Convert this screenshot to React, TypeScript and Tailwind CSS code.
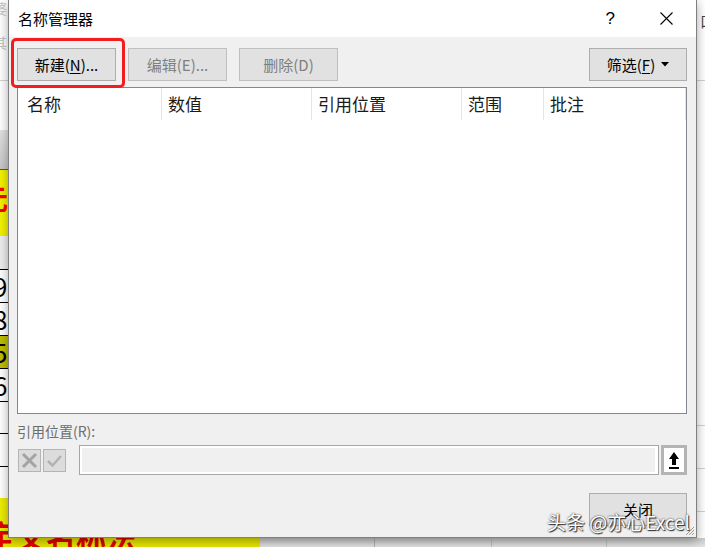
import React from "react"

const cjk = "font-['Noto_Sans_CJK_SC','Noto_Sans',sans-serif]"

function LeftStrip() {
  return (
    <div className="flex flex-col overflow-hidden bg-white">
      <div className="h-[80px] overflow-hidden pt-[1px] text-[14px] leading-[14px] text-[#c4c4c4]">
        <div className="ml-[-7px]">婆</div>
        <div className="ml-[-7px] mt-[20px]">其</div>
      </div>
      <div className="h-px bg-[#d4d4d4]" />
      <div className="h-[49px]" />
      <div className="h-[39px] bg-gradient-to-b from-[#e2e2e2] to-[#c6c6c6]" />
      <div className="h-px bg-[#217346]" />
      <div className="h-[66px] overflow-hidden bg-[#f2f200] pt-[14px] text-[28px] font-bold leading-[28px] text-[#ff0000]">
        <div className="ml-[-20px]">元</div>
      </div>
      <div className="h-[33px] bg-[#eeeeee]" />
      {[
        ["9", "bg-white"],
        ["8", "bg-white"],
        ["5", "bg-[#bdbd00]"],
        ["6", "bg-white"],
      ].map(([n, bg]) => (
        <div key={n} className={`h-[33px] overflow-hidden border-t border-black ${bg}`}>
          <div className="ml-[-7px] text-[26px] leading-[32px] text-black">{n}</div>
        </div>
      ))}
      <div className="h-[32px] border-t border-black" />
      <div className="h-[33px] border-t border-black" />
      <div className="h-[32px] border-t border-black" />
      <div className="flex-1 overflow-hidden bg-[#eded00]">
        <div className="ml-[-14px] mt-[21px] whitespace-nowrap text-[30px] font-bold leading-[30px] text-[#e00000]">
          定义名称法
        </div>
      </div>
    </div>
  )
}

function RightStrip() {
  return (
    <div className="flex flex-col overflow-hidden bg-white">
      <div className="ml-[3px] mt-[13px] text-[15px] leading-[15px] text-[#444]">口</div>
      <div className="mt-[52px] h-px bg-[#d0d0d0]" />
      <div className="mt-[344px] h-px bg-[#d0d0d0]" />
      <div className="mt-[42px] h-px bg-[#d0d0d0]" />
      <div className="mt-[42px] h-px bg-[#d0d0d0]" />
    </div>
  )
}

function BottomStrip() {
  return (
    <div className="col-span-3 flex h-[9px] overflow-hidden">
      <div className="w-[260px] overflow-hidden bg-[#e6e600]">
        <div className="ml-[-14px] mt-[-17px] whitespace-nowrap text-[30px] font-bold leading-[30px] text-[#e00000]">
          定义名称法
        </div>
      </div>
      <div className="flex flex-1 bg-gradient-to-b from-[#c9c9c9] to-[#e4e4e4]">
        <div className="w-[115px] border-r border-[#b0b0b0]" />
        <div className="w-[117px] border-r border-[#c0c0c0]" />
        <div className="w-[115px] border-r border-[#c0c0c0]" />
      </div>
    </div>
  )
}

function Btn({
  children,
  disabled,
  className = "",
}: {
  children: React.ReactNode
  disabled?: boolean
  className?: string
}) {
  return (
    <div
      className={`flex h-[33px] items-center justify-center border bg-[#e1e1e1] text-[15px] leading-[18px] ${
        disabled ? "border-[#bfbfbf] text-[#7e7e7e]" : "border-[#adadad] text-black"
      } ${className}`}
    >
      {children}
    </div>
  )
}

function RefEdit() {
  return (
    <div className="mt-[4px] flex h-[30px] items-center">
      <div className="ml-[1px] flex h-[23px] w-[23px] items-center justify-center border border-[#b4b4b4] bg-[#dcdcdc]">
        <svg width="17" height="17" viewBox="0 0 17 17">
          <path d="M2 2 L15 15 M15 2 L2 15" stroke="#a3a3a3" strokeWidth="3" />
        </svg>
      </div>
      <div className="ml-[2px] flex h-[23px] w-[23px] items-center justify-center border border-[#b4b4b4] bg-[#dcdcdc]">
        <svg width="17" height="17" viewBox="0 0 17 17">
          <path d="M2 9 L6.5 13.5 L15 4" stroke="#b2b2b2" strokeWidth="2.5" fill="none" />
        </svg>
      </div>
      <div className="ml-[13px] h-[30px] flex-1 border border-[#a6a6a6] bg-white pb-[2px] pl-[2px] pr-[3px] pt-[2px]">
        <div className="h-full bg-[#f0f0f0]" />
      </div>
      <div className="ml-[2px] flex h-[30px] w-[26px] items-center justify-center border-[3px] border-[#b4b4b4] bg-white">
        <svg width="12" height="19" viewBox="0 0 12 19">
          <path d="M6 1 L11 8 L8 8 L8 14 L4 14 L4 8 L1 8 Z" fill="#000" />
          <rect x="1" y="16" width="10" height="2" fill="#000" />
        </svg>
      </div>
    </div>
  )
}

function NameManager() {
  const cols = [
    { label: "名称", w: "w-[143px]", pl: "pl-[9px]" },
    { label: "数值", w: "w-[150px]", pl: "pl-[6px]" },
    { label: "引用位置", w: "w-[150px]", pl: "pl-[6px]" },
    { label: "范围", w: "w-[82px]", pl: "pl-[6px]" },
    { label: "批注", w: "w-[142px]", pl: "pl-[6px]" },
  ]
  return (
    <div className={`relative flex flex-col border-x border-b border-[#7f7f7f] bg-[#f0f0f0] shadow-[0_3px_10px_rgba(0,0,0,0.35)] ${cjk}`}>
      <div className="flex h-[37px] items-center bg-white pl-[9px]">
        <span className="text-[15px] leading-[20px] text-black">名称管理器</span>
        <span className="ml-auto mr-[45px] font-['Liberation_Sans',sans-serif] text-[17px] leading-[20px] text-black">?</span>
        <svg className="mr-[23px]" width="13" height="13" viewBox="0 0 13 13">
          <path d="M0.5 0.5 L12.5 12.5 M12.5 0.5 L0.5 12.5" stroke="#000" strokeWidth="1.1" />
        </svg>
      </div>

      <div className="relative flex flex-1 flex-col pb-[11px] pl-[8px] pr-[9px] pt-[11px]">
        <div className="absolute left-[2px] top-[1px] h-[50px] w-[114px] rounded-[5px] border-[3px] border-[#f41d1d]" />

        <div className="flex gap-[12px]">
          <Btn className="w-[99px]">
            新建(<span className="underline underline-offset-2">N</span>)...
          </Btn>
          <Btn disabled className="w-[99px]">
            编辑(E)...
          </Btn>
          <Btn disabled className="w-[99px]">
            删除(D)
          </Btn>
          <Btn className="ml-auto w-[98px]">
            筛选(<span className="underline underline-offset-2">F</span>)
            <svg className="ml-[6px]" width="8" height="5" viewBox="0 0 8 5">
              <path d="M0 0 L8 0 L4 4.5 Z" fill="#000" />
            </svg>
          </Btn>
        </div>

        <div className="mt-[6px] h-[327px] border border-[#828790] bg-white">
          <div className="flex h-[32px]">
            {cols.map((c, i) => (
              <div
                key={c.label}
                className={`flex items-center ${c.w} ${c.pl} ${i > 0 ? "border-l border-[#e5e5e5]" : ""} text-[17px] leading-[22px] text-[#1a1a1a]`}
              >
                {c.label}
              </div>
            ))}
            <div className="border-l border-[#e5e5e5]" />
          </div>
        </div>

        <div className="mt-[7px] text-[14px] leading-[20px] text-[#6d6d6d]">引用位置(R):</div>

        <RefEdit />

        <div className="mt-[18px] flex justify-end">
          <Btn className="w-[98px]">关闭</Btn>
        </div>

        <div className="absolute bottom-[4px] right-[6px] whitespace-nowrap text-[19px] leading-[22px] text-white [text-shadow:0_0_2px_#222,1px_1px_1px_#333]">
          头条 @亦心Excel
        </div>

        <svg className="absolute bottom-[1px] right-[1px]" width="12" height="12" viewBox="0 0 12 12">
          <path d="M11 3 L3 11 M11 6 L6 11 M11 9 L9 11" stroke="#9a9a9a" strokeWidth="1" />
        </svg>
      </div>
    </div>
  )
}

export default function App() {
  return (
    <div className={`grid h-[547px] w-[705px] grid-cols-[8px_689px_8px] grid-rows-[538px_9px] overflow-hidden bg-white ${cjk}`}>
      <LeftStrip />
      <NameManager />
      <RightStrip />
      <BottomStrip />
    </div>
  )
}
